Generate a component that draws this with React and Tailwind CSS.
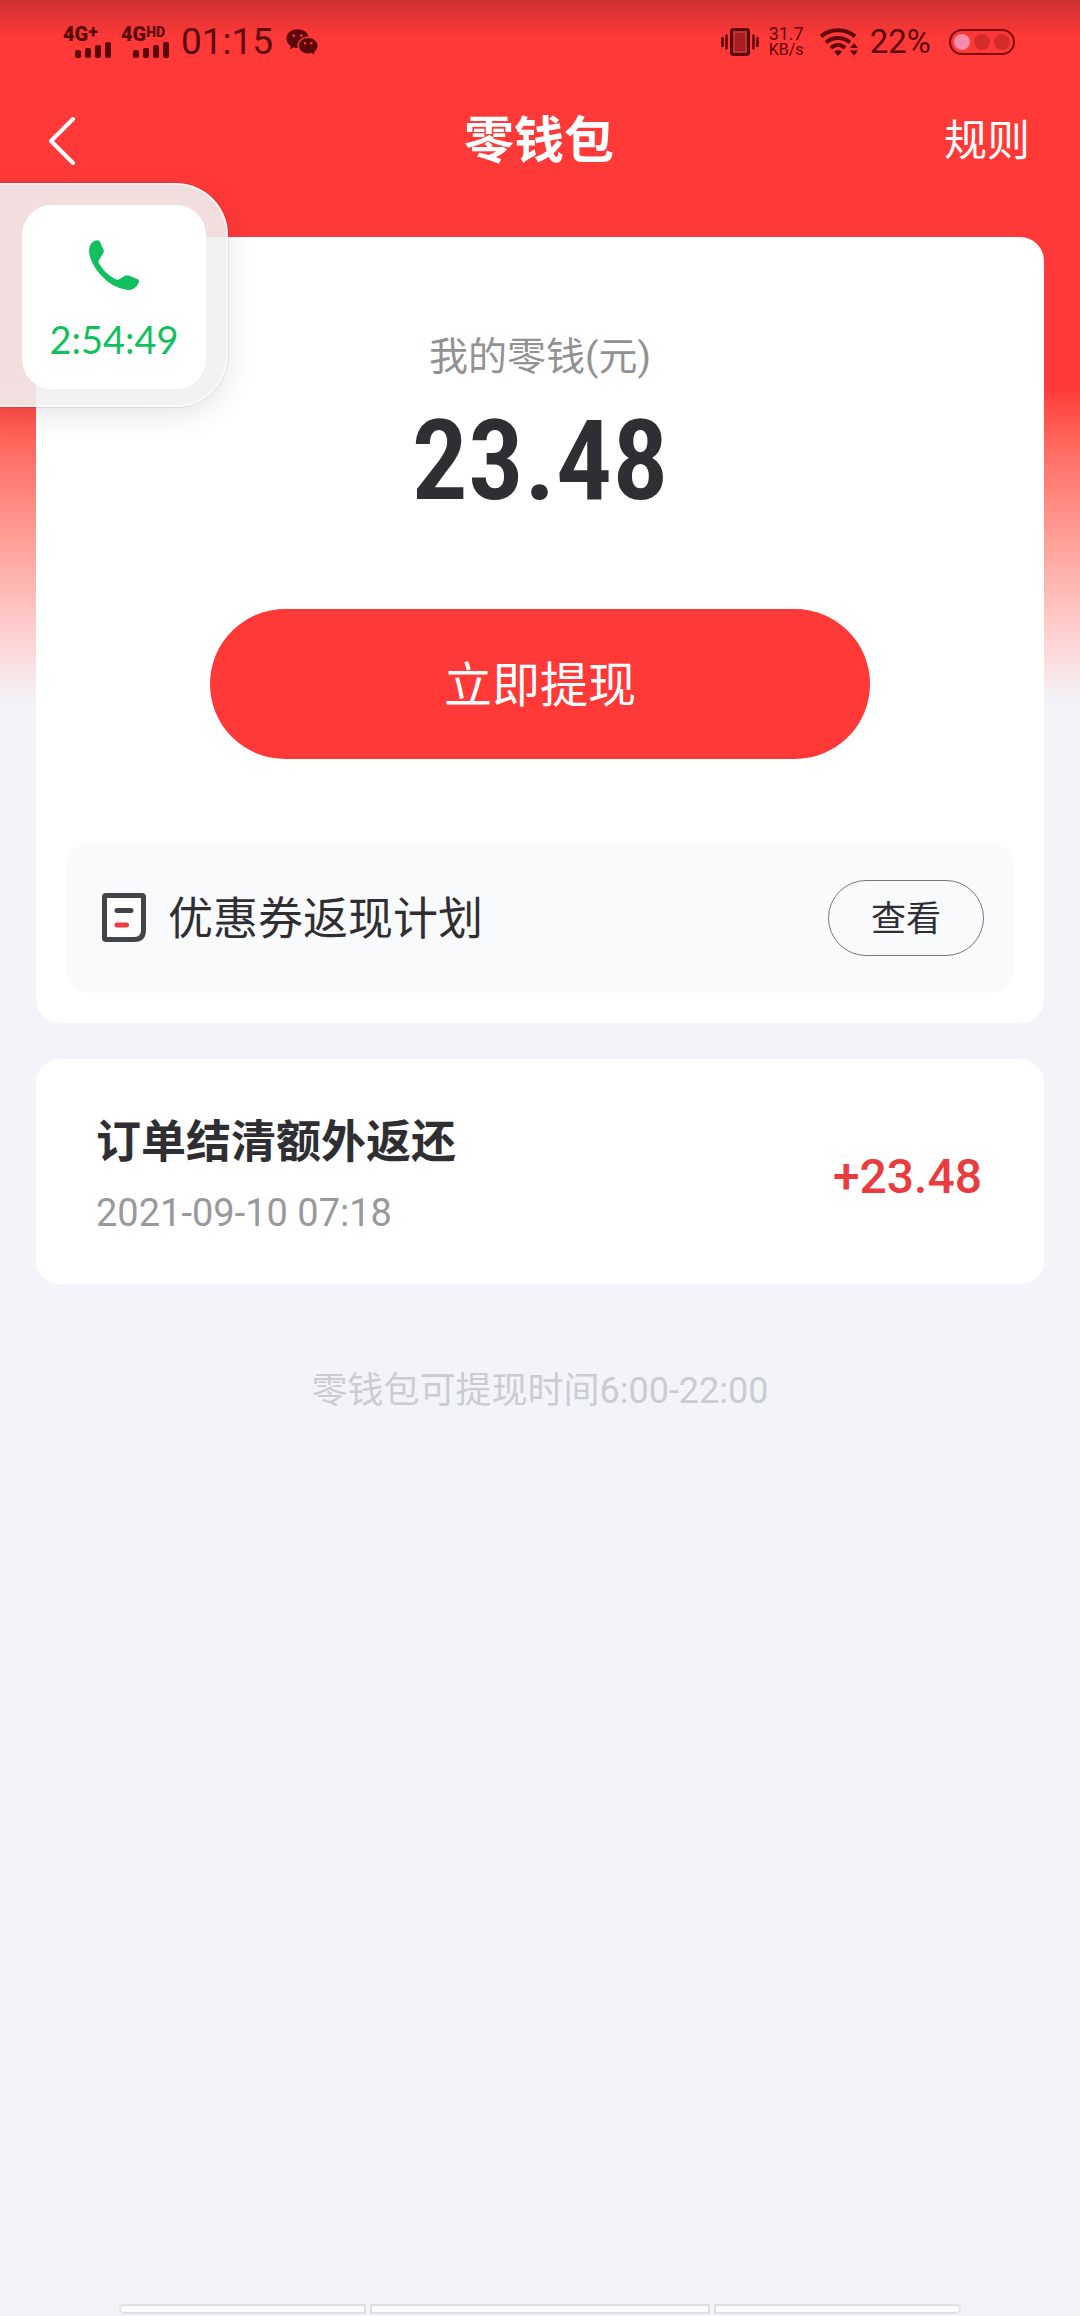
import React from "react";
import { RiWechatFill } from "react-icons/ri";

const records = [
  { id: 1, title: "订单结清额外返还", time: "2021-09-10 07:18", amount: "+23.48" },
];

function Signal({ label, sup, supClass }) {
  return (
    <div className="flex flex-col items-start">
      <div className="flex h-4 items-start font-black leading-4">
        <span className="text-[20px]">{label}</span>
        <span className={supClass}>{sup}</span>
      </div>
      <div className="ml-3 flex h-4 items-end gap-1">
        <span className="h-2 w-[6px] rounded-[2px] bg-current" />
        <span className="h-[10px] w-[6px] rounded-[2px] bg-current" />
        <span className="h-[13px] w-[6px] rounded-[2px] bg-current" />
        <span className="h-4 w-[6px] rounded-[2px] bg-current" />
      </div>
    </div>
  );
}

function VibrateIcon() {
  return (
    <svg className="h-7 w-[38px]" viewBox="0 0 38 28" fill="none">
      <rect x="10.5" y="1.5" width="17" height="25" rx="2" fill="#a81f22" stroke="currentColor" strokeWidth="3" />
      <rect x="13" y="4" width="12" height="20" stroke="#cf4a4a" strokeWidth="1" />
      <g stroke="currentColor" strokeWidth="2.6" strokeLinecap="round">
        <path d="M1.5 10v8M5.5 7.500v13M32.500 7.500v13M36.500 10v8" />
      </g>
    </svg>
  );
}

function WifiIcon() {
  return (
    <svg className="h-7 w-[38px]" viewBox="0 0 38 28" fill="none">
      <g stroke="currentColor" strokeWidth="4">
        <path d="M1 8.500C10 .2 26 .2 35 8.500" />
        <path d="M6 14.500c7-6 17-6 24 0" />
        <path d="M11 20c4-4 10-4 14 0" />
      </g>
      <path d="M14 23.500q4-3 8 0L18 28z" fill="currentColor" />
      <path d="M34 15l4 5h-8zM30 22.500h8l-4 5z" fill="currentColor" />
    </svg>
  );
}

function StatusBar() {
  return (
    <div className="flex h-[84px] items-center justify-between bg-linear-to-b from-[#cd3031] to-[#ff3938] to-45% pl-[63px] pr-[65px] text-[#5c0709]">
      <div className="flex items-center">
        <Signal label="4G" sup="+" supClass="text-[18px] leading-3" />
        <div className="ml-[10px]">
          <Signal label="4G" sup="HD" supClass="text-[14px] leading-3" />
        </div>
        <span className="ml-3 text-[37px] leading-10">01:15</span>
        <RiWechatFill className="ml-3 h-[34px] w-[34px]" />
      </div>
      <div className="flex items-center">
        <VibrateIcon />
        <div className="ml-[10px] flex flex-col">
          <span className="text-[18px] leading-4">31.7</span>
          <span className="text-[16px] leading-4">KB/s</span>
        </div>
        <span className="ml-4">
          <WifiIcon />
        </span>
        <span className="ml-3 text-[33px] leading-10">22%</span>
        <div className="ml-[18px] flex h-[26px] w-[66px] items-center justify-between rounded-full border-2 border-[#7d0e10] px-[3px]">
          <span className="h-4 w-4 rounded-full bg-[#f58cab]" />
          <span className="h-4 w-4 rounded-full bg-[#d42b2d]" />
          <span className="h-4 w-4 rounded-full bg-[#d42b2d]" />
        </div>
      </div>
    </div>
  );
}

function NavBar() {
  return (
    <header className="grid h-[113px] grid-cols-3 items-center pl-12 pr-[50px] text-white">
      <button type="button" aria-label="返回" className="justify-self-start">
        <svg className="h-12 w-7" viewBox="0 0 28 48" fill="none" stroke="currentColor" strokeWidth="4" strokeLinecap="round" strokeLinejoin="round">
          <path d="M25 2L3 24l22 22" />
        </svg>
      </button>
      <h1 className="text-center text-[50px] leading-[60px] font-bold">零钱包</h1>
      <a href="#rules" className="justify-self-end text-[43px] leading-[60px]">
        规则
      </a>
    </header>
  );
}

function CouponIcon() {
  return (
    <svg className="h-[50px] w-11" viewBox="0 0 44 50" fill="none">
      <path d="M4 2.500h36q1.500 0 1.500 1.500v33q0 9.500-9 9.500H4q-1.500 0-1.500-1.500V4q0-1.500 1.500-1.500z" fill="#fdfdfe" stroke="#434448" strokeWidth="5" />
      <path d="M15 17.500h14" stroke="#434448" strokeWidth="5" strokeLinecap="round" />
      <path d="M15 32h9.500" stroke="#ec3a45" strokeWidth="5" strokeLinecap="round" />
    </svg>
  );
}

function BalanceCard() {
  return (
    <section className="flex flex-col items-center rounded-3xl bg-white px-[30px] pt-[92px] pb-[30px]">
      <p className="text-[39px] leading-[56px] text-[#929294]">我的零钱(元)</p>
      <p className="mt-6 font-['Roboto_Condensed','Roboto',sans-serif] text-[112px] leading-[104px] font-semibold text-[#2f2f33]">
        23.48
      </p>
      <button type="button" className="mt-24 h-[150px] w-[660px] max-w-full rounded-full bg-[#ff3938] pt-1 text-[48px] text-white">
        立即提现
      </button>
      <div className="mt-[84px] flex h-[150px] w-full items-center rounded-3xl bg-[#f9fafc] pl-9 pr-[30px]">
        <CouponIcon />
        <span className="ml-[22px] pt-1 text-[45px] leading-[60px] text-[#2f2f33]">优惠券返现计划</span>
        <button type="button" className="ml-auto h-[76px] w-[156px] rounded-full border border-[#77777b] pt-1 text-[35px] text-[#2f2f33]">
          查看
        </button>
      </div>
    </section>
  );
}

function RecordCard({ item }) {
  return (
    <li className="flex items-center justify-between rounded-3xl bg-white pt-[54px] pr-[62px] pb-[43px] pl-[60px]">
      <div>
        <h2 className="text-[45px] leading-[60px] font-bold text-[#2f2f33]">{item.title}</h2>
        <p className="mt-3 text-[38px] leading-[56px] text-[#99999b]">{item.time}</p>
      </div>
      <span className="text-[48px] leading-[60px] font-medium text-[#ea3c3f]">{item.amount}</span>
    </li>
  );
}

// floating call bubble docked to the left edge
function CallBubble() {
  return (
    <button
      type="button"
      aria-label="通话中 2:54:49"
      className="absolute top-[183px] left-0 rounded-r-[52px] border-2 border-l-0 border-white/60 bg-[#f1f1f1]/90 pt-5 pr-5 pb-4 pl-[22px] shadow-[0_0_0_1px_rgba(0,0,0,0.08),0_8px_30px_rgba(0,0,0,0.1)]"
    >
      <span className="flex h-[184px] w-[184px] flex-col items-center rounded-[30px] bg-white pt-[35px] text-[#12bf5f]">
        <svg className="h-[50px] w-[50px]" viewBox="0 0 150 150" fill="currentColor">
          <path d="M8 8Q25-4 32 4L44 30Q46 37 40 44L30 60Q27 66 31 72 50 103 80 118 86 121 92 117L108 107Q114 104 121 107L145 117Q153 120 149 128 140 150 116 150 70 145 35 105 0 65 0 30 1 17 8 8Z" />
        </svg>
        <span className="mt-6 font-['Lato',sans-serif] text-[38px] leading-[50px]">2:54:49</span>
      </span>
    </button>
  );
}

function App() {
  return (
    <div className="relative flex min-h-screen flex-col bg-[#f3f4fa] font-['Roboto','Noto_Sans_CJK_SC',sans-serif]">
      <div className="absolute inset-x-0 top-0 h-[705px] bg-linear-to-b from-[#ff3938] from-55% to-[#f3f4fa]" />
      <div className="relative flex grow flex-col">
        <StatusBar />
        <NavBar />
        <main className="flex flex-col px-9 pt-10">
          <BalanceCard />
          <ul className="mt-9 flex flex-col gap-9">
            {records.map((item) => (
              <RecordCard key={item.id} item={item} />
            ))}
          </ul>
          <p className="mt-20 text-center text-[36px] leading-[54px] text-[#cbccd0]">
            零钱包可提现时间6:00-22:00
          </p>
        </main>
        {/* gesture hints */}
        <div className="mx-auto mt-auto mb-[2px] flex w-[842px] max-w-full gap-1">
          <span className="h-[10px] w-[247px] rounded-l-full border-2 border-[#dfe0e6] bg-[#fafbfe]" />
          <span className="h-[10px] grow border-2 border-[#dfe0e6] bg-[#fafbfe]" />
          <span className="h-[10px] w-[247px] rounded-r-full border-2 border-[#dfe0e6] bg-[#fafbfe]" />
        </div>
      </div>
      <CallBubble />
    </div>
  );
}

export default App;
